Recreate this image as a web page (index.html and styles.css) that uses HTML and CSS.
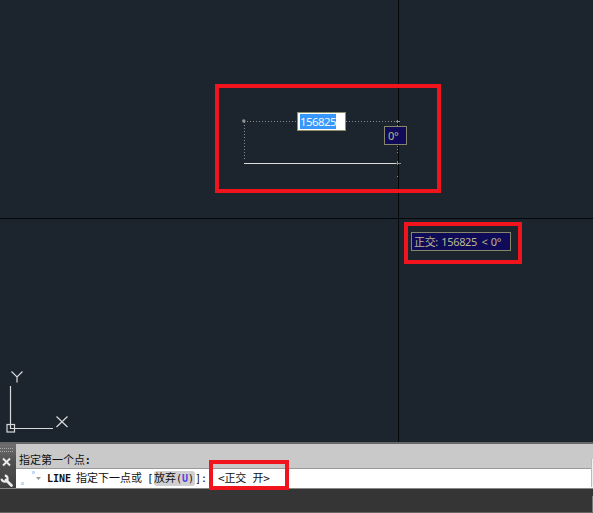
FILE: index.html
```
<!DOCTYPE html>
<html lang="zh-CN">
<head>
<meta charset="utf-8">
<title>CAD</title>
<link rel="stylesheet" href="styles.css">
</head>
<body>
<main class="canvas">
  <svg class="drawing" width="593" height="442" viewBox="0 0 593 442" fill="none">
    <path d="M0 218.5H593M398.5 0V442" stroke="#05080b"/>
    <g stroke="#858b8c" stroke-dasharray="1 2">
      <path d="M244 121.5H397M244.5 122V160M397.5 122V155"/>
    </g>
    <path d="M244 163.5H398" stroke="#dddeda"/>
    <path d="M396 163.5H401M397.5 161V165M397.5 176V177M396 121.5H400M397.5 120V123" stroke="#8d9292"/>
    <circle cx="243.8" cy="121" r="1.8" fill="#8b9090"/>
    <g stroke="#d7dadb" stroke-width="1.2">
      <path d="M10.5 386V428.5H53"/>
      <rect x="7" y="424.5" width="7.5" height="7.5"/>
      <path d="M11.5 371.5L17 377L22.5 371.5M17 377V382.5M56.5 416.5L67.5 427M67.5 416.5L56.5 427"/>
    </g>
  </svg>
  <div class="field"><span class="selected">156825</span></div>
  <div class="tip angle">0°</div>
  <div class="tip polar">正交: <span class="num">156825</span> &lt; 0°</div>
  <div class="mark mark-line"></div>
  <div class="mark mark-polar"></div>
</main>
<section class="command">
  <div class="grip">
    <svg width="16" height="44" viewBox="0 0 16 44" fill="none">
      <path d="M0 4.5H14M0 7.5H14" stroke="#aaa" stroke-dasharray="1 1"/>
      <path d="M3 14.5L10 21.5M10 14.5L3 21.5" stroke="#eee" stroke-width="1.9"/>
      <path d="M6 36L11.5 41.5" stroke="#eee" stroke-width="2.8" stroke-linecap="round"/>
      <path d="M4.8 31.6A3 3 0 1 1 1.6 34.8" stroke="#eee" stroke-width="2.1"/>
    </svg>
  </div>
  <div class="lines">
    <div class="history">指定第一个点<b>:</b></div>
    <div class="prompt">
      <svg class="prompt-icon" width="31" height="19" viewBox="0 0 31 19">
        <path d="M16 2h3v3h-3zM5 13h3v3h-3z" fill="#c3daf8"/>
        <path d="M20 8h5l-2.5 3z" fill="#999"/>
      </svg>
      <b class="name">LINE</b>
      <span class="ask">指定下一点或</span>
      <span class="bracket">[</span>
      <span class="option">放弃<span class="key">(<b>U</b>)</span></span>
      <span class="close">]:</span>
      <span class="answer">&lt;正交 开&gt;</span>
    </div>
  </div>
  <div class="mark mark-command"></div>
  <i class="scroll-edge"></i>
</section>
<footer class="status"><i class="corner"></i></footer>
</body>
</html>
```
FILE: styles.css
```
* { box-sizing: border-box; }
body {
  margin: 0;
  width: 593px;
  height: 513px;
  overflow: hidden;
  background: #353535;
  font-family: "Liberation Sans", "Noto Sans CJK SC", sans-serif;
}
.canvas { position: relative; height: 442px; background: #1c242d; overflow: hidden; }
.drawing { display: block; }
.field, .tip { position: absolute; font-family: "Noto Sans", "Noto Sans CJK SC", sans-serif; white-space: nowrap; }
.field {
  left: 297px; top: 112px; width: 49px; height: 19px;
  padding: 1px 0 0 2px;
  border: 1px solid #8f9068;
  background: #fff;
  font-size: 11.5px;
  line-height: 15px;
}
.selected { display: block; width: 36px; height: 15px; background: #3797fa; color: #f0f8ff; letter-spacing: -.6px; }
.tip { border: 1px solid #85866a; background: #100b58; color: #b9b88d; font-size: 11px; line-height: 17px; }
.angle { left: 384px; top: 126px; width: 23px; height: 19px; padding-left: 3px; letter-spacing: -.4px; }
.polar { left: 411px; top: 232px; width: 100px; height: 19px; padding-left: 2px; letter-spacing: -.35px; word-spacing: .9px; }
.num { letter-spacing: -.35px; margin-right: 1px; }
.mark { position: absolute; border: 4px solid #f1141d; }
.mark-line { left: 215px; top: 84px; width: 226px; height: 109px; }
.mark-polar { left: 404px; top: 222px; width: 118px; height: 42px; }
.mark-command { left: 209px; top: 16px; width: 80px; height: 30px; }
.command {
  position: relative;
  display: flex;
  height: 47px;
  border-top: 2px solid #666;
  border-bottom: 1px solid #888;
}
.grip { flex: 0 0 16px; background: linear-gradient(#707070, #505050 40%, #404040); }
.grip svg { display: block; }
.lines { flex: 1; color: #111; white-space: nowrap; }
.history { height: 25px; padding-left: 3px; background: #c9c9c9; border-bottom: 1px solid #999; font: 11px/31px "Noto Sans CJK SC", sans-serif; }
.history b { margin-left: 1px; }
.prompt {
  display: flex;
  height: 19px;
  background: #fff;
  font: 11px/19px "DejaVu Sans Mono", "Noto Sans CJK SC", monospace;
}
.prompt-icon { flex: none; }
.name { width: 29px; font-size: 10px; }
.ask { width: 71px; }
.bracket { width: 7px; }
.option { width: 41px; height: 15px; margin-top: 2px; line-height: 15px; background: #d0d0d0; border-radius: 3px; }
.key { font-size: 10px; }
.key b { color: #5540e0; }
.close { width: 23px; font-size: 10px; }
.answer { font-size: 11px; letter-spacing: -.2px; }
.scroll-edge { position: absolute; right: 0; top: 15px; width: 2px; height: 28px; background: #efefef; border-left: 1px solid #bbb; }
.status { display: flex; justify-content: flex-end; align-items: flex-end; height: 24px; background: #353535; border-bottom: 1px solid #666; }
.corner { width: 1px; height: 16px; background: #777; }
```
